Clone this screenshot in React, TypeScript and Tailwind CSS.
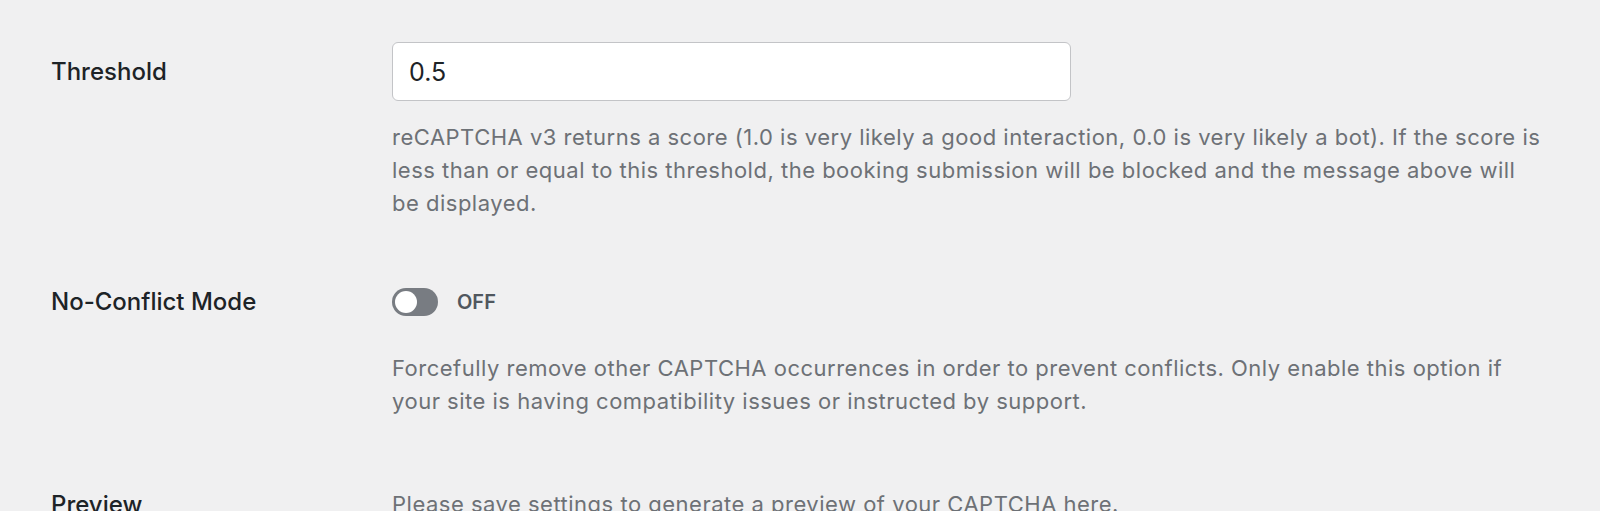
import { useState } from 'react';

const labelCls = "w-[341px] shrink-0 text-[24px] font-medium text-[#1d2327]";
const descCls = "text-[22px] leading-[33px] tracking-[0.5px] text-[#6d7176]";

export default function App() {
  const [noConflict, setNoConflict] = useState(false);

  return (
    <div className="min-h-screen bg-[#f0f0f1] pl-[51px] pt-[42px] font-['Inter',sans-serif] overflow-hidden">
      {/* Threshold */}
      <div className="flex">
        <div className={`${labelCls} h-[59px] flex items-center`}>Threshold</div>
        <div className="w-[1156px]">
          <input
            type="text"
            defaultValue="0.5"
            className="block w-[679px] h-[59px] rounded-[6px] border border-[#c3c4c7] bg-white px-[16px] text-[25px] text-[#1d2327] outline-none"
          />
          <p className={`${descCls} mt-[20px]`}>
            reCAPTCHA v3 returns a score (1.0 is very likely a good interaction, 0.0 is very likely a bot). If the score is less than or equal to this threshold, the booking submission will be blocked and the message above will be displayed.
          </p>
        </div>
      </div>

      {/* No-Conflict Mode */}
      <div className="flex mt-[64px]">
        <div className={`${labelCls} h-[35px] flex items-center`}>No-Conflict Mode</div>
        <div className="w-[1156px]">
          <div className="flex items-center h-[35px]">
            <button
              type="button"
              onClick={() => setNoConflict(!noConflict)}
              className={`flex w-[46px] h-[28px] rounded-full p-[3px] ${noConflict ? 'bg-[#2271b1] justify-end' : 'bg-[#787c82] justify-start'}`}
            >
              <span className="block w-[22px] h-[22px] rounded-full bg-white" />
            </button>
            <span className="ml-[19px] text-[20px] font-semibold text-[#50575e]">{noConflict ? 'ON' : 'OFF'}</span>
          </div>
          <p className={`${descCls} mt-[33px]`}>
            Forcefully remove other CAPTCHA occurrences in order to prevent conflicts. Only enable this option if your site is having compatibility issues or instructed by support.
          </p>
        </div>
      </div>

      {/* Preview */}
      <div className="flex mt-[70px]">
        <div className={`${labelCls} leading-[33px]`}>Preview</div>
        <div className="w-[1156px]">
          <p className={descCls}>Please save settings to generate a preview of your CAPTCHA here.</p>
        </div>
      </div>
    </div>
  );
}
